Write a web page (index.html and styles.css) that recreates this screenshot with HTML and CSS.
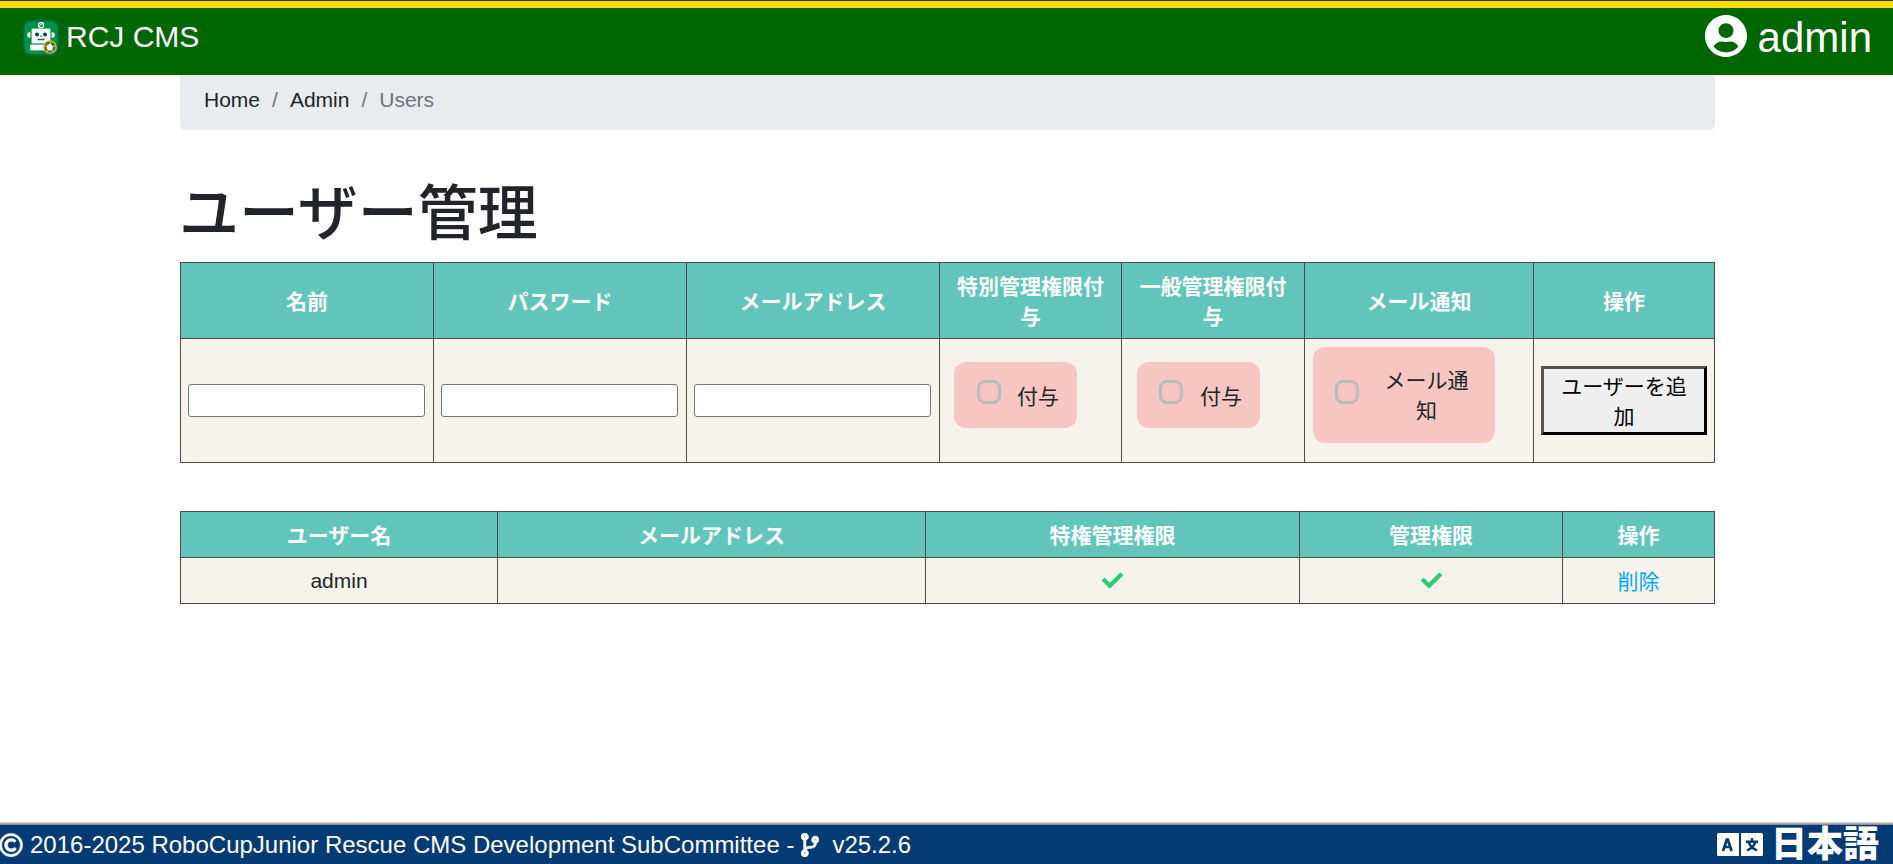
FILE: index.html
```html
<!DOCTYPE html>
<html lang="ja">
<head>
<meta charset="utf-8">
<title>RCJ CMS</title>
<link rel="stylesheet" href="styles.css">
</head>
<body>
<header class="navbar">
  <a class="brand">
    <svg class="logo" viewBox="0 0 36 36">
      <rect x=".8" y=".8" width="34.4" height="34" rx="7" fill="#009245" stroke="#006a4c" stroke-width="1.5"/>
      <circle cx="18" cy="5.2" r="2.6" fill="none" stroke="#fff" stroke-width="1.1"/>
      <path d="M16 6l3-2 2-1" fill="none" stroke="#fff"/>
      <path d="M9 9h18v14H9zM7.500 25H26v5H7.500zM7 12.500v5a2.500 2.500 0 0 1 0-5zM29 12.500v5a2.500 2.500 0 0 0 0-5z" fill="#fff" stroke="#fff" stroke-width=".8"/>
      <circle cx="14" cy="14.500" r="2" fill="#064d35"/><circle cx="22" cy="14.500" r="2" fill="#064d35"/>
      <path d="M14.500 19.500h7M18 15.500v1.500" stroke="#08794a" stroke-width="1.300"/>
      <circle cx="27" cy="27" r="6.200" fill="#138846" stroke="#f7a32e" stroke-width="1.300"/>
      <path d="M24.500 24.500l3.500-.5 2 3-1.200 3.500h-3.600L23.500 28z" fill="#fff"/>
      <path d="M27.500 21v3M33 25.500l-3 1M31 32l-2-2M23.500 32l1.700-2M21 26l3 .5" stroke="#f7a32e" stroke-width="1.500"/>
    </svg>
    <span>RCJ CMS</span>
  </a>
  <a class="account">
    <svg class="account-icon" viewBox="0 8 496 496"><path fill="#fff" d="M248 8C111 8 0 119 0 256s111 248 248 248 248-111 248-248S385 8 248 8zm0 96c48.600 0 88 39.400 88 88s-39.400 88-88 88-88-39.400-88-88 39.400-88 88-88zm0 344c-58.700 0-111.300-26.600-146.500-68.200 18.800-35.400 55.600-59.800 98.500-59.800 2.400 0 4.800.4 7.100 1.100 13 4.200 26.600 6.900 40.900 6.900 14.300 0 28-2.700 40.900-6.900 2.300-.7 4.700-1.100 7.100-1.100 42.900 0 79.700 24.400 98.500 59.800C359.300 421.400 306.700 448 248 448z"/></svg>
    <span>admin</span>
  </a>
</header>
<main class="container">
  <nav class="breadcrumb"><a>Home</a><i>/</i><a>Admin</a><i>/</i><span>Users</span></nav>
  <h1 class="title">ユーザー管理</h1>
  <table class="grid add-user">
    <colgroup><col class="w253"><col class="w253"><col class="w253"><col class="w182"><col class="w183"><col class="w229"><col class="w181"></colgroup>
    <tr><th>名前</th><th>パスワード</th><th>メールアドレス</th><th>特別管理権限付与</th><th>一般管理権限付与</th><th>メール通知</th><th>操作</th></tr>
    <tr>
      <td><input class="field" type="text"></td>
      <td><input class="field" type="text"></td>
      <td><input class="field" type="text"></td>
      <td><label class="check grant"><span class="box"></span><span>付与</span></label></td>
      <td><label class="check grant general"><span class="box"></span><span>付与</span></label></td>
      <td><label class="check notify"><span class="box"></span><span class="notify-text">メール通知</span></label></td>
      <td><button class="add">ユーザーを追加</button></td>
    </tr>
  </table>
  <table class="grid users">
    <colgroup><col class="w317"><col class="w428"><col class="w374"><col class="w263"><col class="w152"></colgroup>
    <tr><th>ユーザー名</th><th>メールアドレス</th><th>特権管理権限</th><th>管理権限</th><th>操作</th></tr>
    <tr>
      <td>admin</td><td></td>
      <td><svg class="tick" viewBox="0 0 512 512"><path fill="#2ecc71" d="M173.898 439.404l-166.400-166.400c-9.997-9.997-9.997-26.206 0-36.204l36.203-36.204c9.997-9.998 26.207-9.998 36.204 0L192 312.690 432.095 72.596c9.997-9.997 26.207-9.997 36.204 0l36.203 36.204c9.997 9.997 9.997 26.206 0 36.204l-294.400 294.401c-9.998 9.997-26.207 9.997-36.204-.001z"/></svg></td>
      <td><svg class="tick" viewBox="0 0 512 512"><path fill="#2ecc71" d="M173.898 439.404l-166.400-166.400c-9.997-9.997-9.997-26.206 0-36.204l36.203-36.204c9.997-9.998 26.207-9.998 36.204 0L192 312.690 432.095 72.596c9.997-9.997 26.207-9.997 36.204 0l36.203 36.204c9.997 9.997 9.997 26.206 0 36.204l-294.400 294.401c-9.998 9.997-26.207 9.997-36.204-.001z"/></svg></td>
      <td class="action"><a class="remove">削除</a></td>
    </tr>
  </table>
</main>
<footer class="footer">
  <div class="credits">
    <svg class="copy" viewBox="0 0 512 512"><path fill="#fff" stroke="#fff" stroke-width="12" d="M256 8C119.033 8 8 119.033 8 256s111.033 248 248 248 248-111.033 248-248S392.967 8 256 8zm0 448c-110.532 0-200-89.451-200-200 0-110.531 89.451-200 200-200 110.532 0 200 89.451 200 200 0 110.532-89.451 200-200 200zm107.351-101.064c-9.614 9.712-45.530 41.396-104.065 41.396-82.430 0-140.484-61.425-140.484-141.567 0-79.152 60.275-139.401 139.762-139.401 55.531 0 88.738 26.620 97.593 34.779a11.965 11.965 0 0 1 1.936 15.322l-18.155 28.113c-3.841 5.950-11.966 7.282-17.499 2.921-8.595-6.776-31.814-22.538-61.708-22.538-48.303 0-77.916 35.330-77.916 80.082 0 41.589 26.888 83.692 78.277 83.692 32.657 0 56.843-19.039 65.726-27.225 5.270-4.857 13.596-4.039 17.820 1.738l19.865 27.170a11.947 11.947 0 0 1-1.152 15.518z"/></svg>
    <span>2016-2025 RoboCupJunior Rescue CMS Development SubCommittee -</span>
    <svg class="branch" viewBox="0 0 384 512"><path fill="#fff" stroke="#fff" stroke-width="12" d="M384 144c0-44.200-35.800-80-80-80s-80 35.800-80 80c0 36.400 24.300 67.100 57.500 76.800-.6 16.100-4.200 28.500-11 36.900-15.400 19.200-49.300 22.400-85.200 25.700-28.200 2.600-57.400 5.400-81.300 16.900v-144c32.500-10.200 56-40.500 56-76.300 0-44.200-35.800-80-80-80S0 35.800 0 80c0 35.800 23.500 66.100 56 76.300v199.300C23.500 365.900 0 396.200 0 432c0 44.200 35.800 80 80 80s80-35.800 80-80c0-34-21.200-63.100-51.200-74.600 3.100-5.200 7.800-9.800 14.900-13.400 16.200-8.200 40.400-10.400 66.100-12.800 42.200-3.900 90-8.400 118.200-43.400 14-17.400 21.100-39.800 21.600-67.900 31.600-10.800 54.400-40.700 54.400-75.900zM80 64c8.800 0 16 7.200 16 16s-7.200 16-16 16-16-7.200-16-16 7.200-16 16-16zm0 384c-8.800 0-16-7.200-16-16s7.200-16 16-16 16 7.200 16 16-7.200 16-16 16zm224-320c8.800 0 16 7.200 16 16s-7.200 16-16 16-16-7.200-16-16 7.200-16 16-16z"/></svg>
    <span>v25.2.6</span>
  </div>
  <div class="language">
    <svg class="lang-icon" viewBox="0 0 46 23">
      <path fill="#fff" d="M1.500 0H22v23H1.500Q0 23 0 21.500v-20Q0 0 1.500 0zM24 0h20.500Q46 0 46 1.500v20q0 1.500-1.500 1.500H24z"/>
      <path d="M6 18L9.800 6.500h1L14.600 18M7.800 14h5" fill="none" stroke="#043b74" stroke-width="2.700"/>
      <path d="M35 5v3.500M29 8.700h12M31.500 9q2 5.500 8.500 8.500M38.500 9q-2 5.500-8.500 8.500" fill="none" stroke="#043b74" stroke-width="2.400"/>
    </svg>
    <span>日本語</span>
  </div>
</footer>
</body>
</html>
```
FILE: styles.css
```css
* { box-sizing: border-box; }
body {
  margin: 0;
  height: 864px;
  display: flex;
  flex-direction: column;
  overflow: hidden;
  background: #fff;
  color: #212529;
  font: 21px/30px "Liberation Sans", "Noto Sans CJK JP", sans-serif;
}
.navbar {
  height: 75px;
  flex: none;
  display: flex;
  justify-content: space-between;
  padding: 0 21px 0 23px;
  color: #fff;
  background: linear-gradient(#333 0 1px, #fd0 1px 8px, #060 8px);
}
.brand { display: flex; padding-top: 20px; font-size: 30px; line-height: 34px; }
.logo { width: 36px; height: 36px; margin-right: 7px; }
.account { display: flex; padding-top: 15px; font-size: 42px; line-height: 46px; }
.account-icon { width: 42px; height: 42px; margin-right: 11px; }
.container { width: 1535px; margin-left: 180px; }
.breadcrumb {
  display: flex;
  height: 55px;
  padding: 10px 23px 10px 24px;
  background: #e9ecef;
  border-radius: 0 0 5px 5px;
}
.breadcrumb i { font-style: normal; color: #6c757d; padding: 0 12px; }
.breadcrumb span { color: #6c757d; }
.title { margin: 49px 0 11px; font-size: 60px; line-height: 72px; font-weight: 500; text-indent: -1px; }
.grid { border-collapse: collapse; table-layout: fixed; width: 1535px; text-align: center; }
.grid th, .grid td { border: 1px solid #504d49; padding: 7px; }
.grid th { background: #62c5bc; color: #fff; font-weight: 700; padding: 8px 8px 5px; }
.grid td { background: #f6f3ec; }
.grid td.action { padding: 8px 7px 5px; }
.add-user tr:first-child { height: 76px; }
.add-user tr:last-child { height: 124px; }
.users { margin-top: 48px; }
.users tr { height: 46px; }
.w253 { width: 253px; } .w182 { width: 182px; } .w183 { width: 183px; }
.w229 { width: 229px; } .w181 { width: 181px; } .w317 { width: 317px; }
.w428 { width: 428px; } .w374 { width: 374px; } .w263 { width: 263px; } .w152 { width: 152px; }
.field {
  display: block;
  width: 237px;
  height: 33px;
  border: 1px solid #767676;
  border-radius: 3px;
  background: #fff;
}
.check { display: flex; align-items: center; background: #f8c6c1; border-radius: 12px; }
.grant { width: 123px; height: 66px; margin: 0 0 11px 7px; padding-left: 23px; gap: 16px; }
.grant.general { margin-left: 8px; padding-left: 22px; gap: 17px; }
.grant span:last-child { padding-top: 4px; }
.notify { width: 182px; height: 96px; margin: 0 0 11px 1px; padding: 0 23px 0 22px; gap: 22px; }
.notify-text { flex: 1; padding-top: 2px; }
.box { flex: none; width: 24px; height: 24px; margin-bottom: 6px; border: 3px solid #bbb; border-radius: 8px; }
.add {
  display: block;
  width: 166px;
  height: 69px;
  padding: 2px 9px 0;
  border: 3px outset #000;
  background: #efefef;
  color: #000;
  font: inherit;
}
.tick { display: block; width: 21px; height: 21px; margin: 0 auto; }
.remove { color: #00a8ff; }
.footer {
  height: 42px;
  margin-top: auto;
  flex: none;
  display: flex;
  justify-content: space-between;
  padding: 3px 14px 0 0;
  color: #fff;
  background: linear-gradient(#ddd 0, #808080 3px, #043b74 3px);
}
.credits { display: flex; align-items: center; font-size: 24px; line-height: 36px; }
.copy { width: 24px; height: 24px; margin: 0 7px 0 -1px; }
.branch { width: 18px; height: 24px; margin: 0 13px 0 7px; }
.language { display: flex; align-items: center; font-size: 36px; line-height: 38px; font-weight: 900; }
.lang-icon { width: 46px; height: 23px; margin-right: 8px; }
.language span { padding-top: 1px; }
```
